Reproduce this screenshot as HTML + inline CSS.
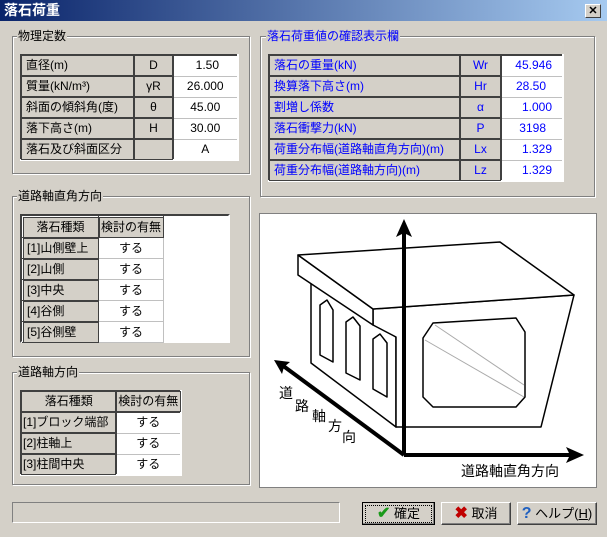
<!DOCTYPE html><html><head><meta charset="utf-8"><style>
*{box-sizing:border-box;margin:0;padding:0}
body{width:607px;height:537px;overflow:hidden;background:#d4d0c8;font-family:"Liberation Sans","Noto Sans CJK JP",sans-serif;font-size:12px;color:#000;position:relative}
.abs{position:absolute}
.title{left:0;top:0;width:607px;height:21px;background:linear-gradient(90deg,#0a246a,#a6caf0);color:#fff;font-weight:bold;font-size:14px;line-height:21px;padding-left:4px}
.close{left:585px;top:4px;width:16px;height:14px;background:#d4d0c8;border:1px solid;border-color:#fff #404040 #404040 #fff;font-size:11px;line-height:12px;text-align:center;font-weight:bold;color:#000}
.grp{border:1px solid #808080;box-shadow:1px 1px 0 #fff, inset 1px 1px 0 #fff}
.lg{background:#d4d0c8;padding:0 1px;line-height:14px}
table{border-collapse:collapse;position:absolute;background:#fff}
td{height:21px;padding:0 4px;white-space:nowrap;line-height:19px}
td.b{background:#d4d0c8;border:1px solid;border-color:#fff #404040 #404040 #fff;outline:1px solid #404040;outline-offset:-1px}
td.w{border:1px solid #c0c0c0;text-align:center}
.tbl{border:2px solid;border-color:#404040 #fff #fff #404040}
.blue td{color:#0000ff}
.btn{border:1px solid;border-color:#fff #404040 #404040 #fff;box-shadow:inset -1px -1px 0 #808080;text-align:center;line-height:21px;font-size:13px}
</style></head><body>
<div class="abs title">落石荷重</div>
<div class="abs close">✕</div>

<div class="abs grp" style="left:12px;top:36px;width:238px;height:138px"></div>
<div class="abs lg" style="left:17px;top:29px">物理定数</div>
<table class="tbl" style="left:20px;top:54px;width:219px">
<tr><td class="b" style="width:113px">直径(m)</td><td class="b" style="width:39px;text-align:center">D</td><td class="w" style="text-align:right;padding-right:18px">1.50</td></tr>
<tr><td class="b">質量(kN/m³)</td><td class="b" style="text-align:center">γR</td><td class="w">26.000</td></tr>
<tr><td class="b">斜面の傾斜角(度)</td><td class="b" style="text-align:center">θ</td><td class="w">45.00</td></tr>
<tr><td class="b">落下高さ(m)</td><td class="b" style="text-align:center">H</td><td class="w">30.00</td></tr>
<tr><td class="b">落石及び斜面区分</td><td class="b"></td><td class="w">A</td></tr>
</table>

<div class="abs grp" style="left:260px;top:36px;width:335px;height:161px"></div>
<div class="abs lg" style="left:266px;top:29px;color:#0000ff">落石荷重値の確認表示欄</div>
<table class="tbl blue" style="left:268px;top:54px;width:296px">
<tr><td class="b" style="width:191px">落石の重量(kN)</td><td class="b" style="width:41px;text-align:center">Wr</td><td class="w" style="text-align:right;padding-right:10px">45.946</td></tr>
<tr><td class="b">換算落下高さ(m)</td><td class="b" style="text-align:center">Hr</td><td class="w" style="text-align:right;padding-right:16px">28.50</td></tr>
<tr><td class="b">割増し係数</td><td class="b" style="text-align:center">α</td><td class="w" style="text-align:right;padding-right:10px">1.000</td></tr>
<tr><td class="b">落石衝撃力(kN)</td><td class="b" style="text-align:center">P</td><td class="w" style="text-align:right;padding-right:16px">3198</td></tr>
<tr><td class="b">荷重分布幅(道路軸直角方向)(m)</td><td class="b" style="text-align:center">Lx</td><td class="w" style="text-align:right;padding-right:10px">1.329</td></tr>
<tr><td class="b">荷重分布幅(道路軸方向)(m)</td><td class="b" style="text-align:center">Lz</td><td class="w" style="text-align:right;padding-right:10px">1.329</td></tr>
</table>

<div class="abs grp" style="left:12px;top:196px;width:238px;height:161px"></div>
<div class="abs lg" style="left:17px;top:189px">道路軸直角方向</div>
<div class="abs" style="left:20px;top:214px;width:210px;height:129px;background:#fff;border:2px solid;border-color:#404040 #fff #fff #404040"></div>
<table style="left:22px;top:216px;width:142px">
<tr><td class="b" style="width:76px;text-align:center">落石種類</td><td class="b" style="text-align:center;padding:0 1px">検討の有無</td></tr>
<tr><td class="b">[1]山側壁上</td><td class="w">する</td></tr>
<tr><td class="b">[2]山側</td><td class="w">する</td></tr>
<tr><td class="b">[3]中央</td><td class="w">する</td></tr>
<tr><td class="b">[4]谷側</td><td class="w">する</td></tr>
<tr><td class="b">[5]谷側壁</td><td class="w">する</td></tr>
</table>

<div class="abs grp" style="left:12px;top:372px;width:238px;height:113px"></div>
<div class="abs lg" style="left:17px;top:365px">道路軸方向</div>
<table class="tbl" style="left:20px;top:390px;width:162px">
<tr><td class="b" style="width:95px;text-align:center;padding:0 1px">落石種類</td><td class="b" style="text-align:center;padding:0 1px">検討の有無</td></tr>
<tr><td class="b" style="padding:0 1px">[1]ブロック端部</td><td class="w">する</td></tr>
<tr><td class="b" style="padding:0 1px">[2]柱軸上</td><td class="w">する</td></tr>
<tr><td class="b" style="padding:0 1px">[3]柱間中央</td><td class="w">する</td></tr>
</table>

<svg class="abs" style="left:0;top:0" width="607" height="537" viewBox="0 0 607 537">
<rect x="259.5" y="213.5" width="337" height="274" fill="#fff" stroke="#808080"/>
<g fill="#fff" stroke="#000" stroke-width="1.5" stroke-linejoin="round">
<polygon points="311,283 396,337 396,427 311,363"/>
<polygon points="373,309 574,295 541,427 396,427 396,337 373,325"/>
<polygon points="298,255 373,309 373,325 298,275"/>
<polygon points="298,255 500,242 574,295 373,309"/>
<polygon points="433,323 516,318 525,332 525,397 516,407 433,407 423,397 423,338"/>
<polygon points="320,305 327,300 333,310 333,362 320,355"/>
<polygon points="346,322 353,317 360,326 360,380 346,373"/>
<polygon points="373,339 380,334 387,343 387,397 373,389"/>
</g>
<line x1="425" y1="340" x2="524" y2="397" stroke="#aaa"/>
<line x1="435" y1="325" x2="524" y2="385" stroke="#aaa"/>
<g stroke="#000" stroke-width="4" fill="none">
<line x1="404" y1="455" x2="404" y2="228"/>
<line x1="404" y1="455" x2="575" y2="455"/>
<line x1="404" y1="455" x2="282" y2="365"/>
</g>
<polygon points="404,219 396,237 404,233 412,237"/>
<polygon points="584,455 566,447 570,455 566,463"/>
<polygon points="274,360 290,362 284,367 282,374"/>
<g font-size="14" font-family="Liberation Sans,Noto Sans CJK JP,sans-serif">
<text x="279" y="398">道</text><text x="295" y="411">路</text><text x="312" y="421">軸</text><text x="328" y="431">方</text><text x="342" y="442">向</text>
<text x="461" y="476">道路軸直角方向</text>
</g>
</svg>

<div class="abs" style="left:12px;top:502px;width:328px;height:21px;border:1px solid;border-color:#808080 #fff #fff #808080"></div>
<div class="abs btn" style="left:362px;top:502px;width:73px;height:23px;border:1px solid #000"><div style="border:1px dotted #000;margin:2px;line-height:16px"><span style="color:#1a9a1a;font-weight:bold;font-size:16px">✔</span> 確定</div></div>
<div class="abs btn" style="left:441px;top:502px;width:70px;height:23px"><span style="color:#c00000;font-weight:bold;font-size:16px">✖</span> 取消</div>
<div class="abs btn" style="left:517px;top:502px;width:80px;height:23px"><span style="color:#2060c0;font-weight:bold;font-size:16px">?</span> ヘルプ(<u>H</u>)</div>
</body></html>
